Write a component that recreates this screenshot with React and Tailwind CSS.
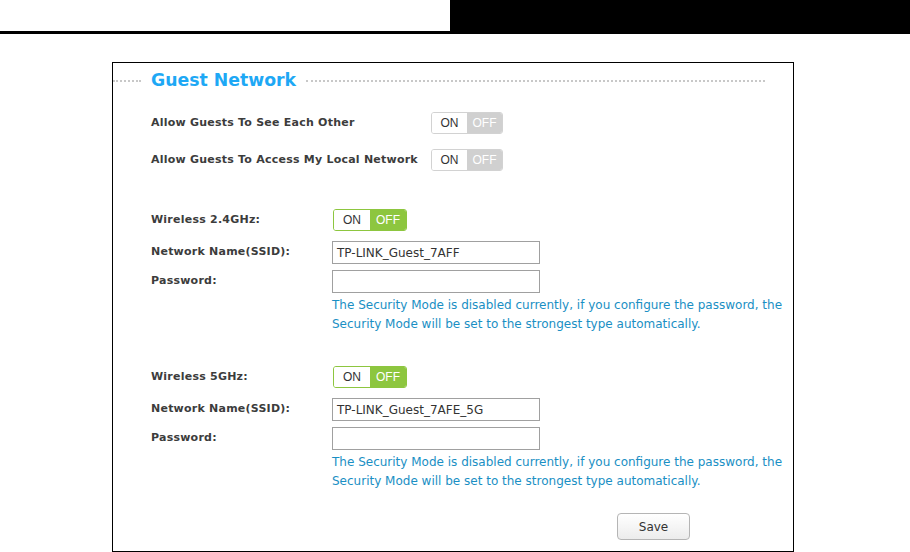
import React from 'react';

const font = { fontFamily: "'DejaVu Sans', Verdana, sans-serif" };

const Toggle = ({ active }) => {
  // active = green style (wireless switches), else gray
  if (active) {
    return (
      <div className="flex h-[22px] w-[74px] rounded-[3px] border border-[#8dc63f] overflow-hidden text-[12px]" style={{ fontFamily: "'Liberation Sans', Arial, sans-serif" }}>
        <div className="flex-1 flex items-center justify-center bg-white text-[#333]">ON</div>
        <div className="flex-1 flex items-center justify-center bg-[#8dc63f] text-white">OFF</div>
      </div>
    );
  }
  return (
    <div className="flex h-[22px] w-[72px] rounded-[3px] border border-[#d2d2d2] overflow-hidden text-[12px]" style={{ fontFamily: "'Liberation Sans', Arial, sans-serif" }}>
      <div className="flex-1 flex items-center justify-center bg-white text-[#333]">ON</div>
      <div className="flex-1 flex items-center justify-center bg-[#d0d0d0] text-white">OFF</div>
    </div>
  );
};

const Label = ({ children, w }) => (
  <div className={`${w} text-[11px] font-bold tracking-[0.23px] text-[#3c3c3c]`}>{children}</div>
);

const TextInput = ({ value }) => (
  <div className="h-[23px] w-[208px] border border-[#a0a0a0] bg-white px-[4px] flex items-center text-[12px] text-[#333]">
    {value}
  </div>
);

const Hint = () => (
  <div className="text-[12px] leading-[19px] text-[#1a8fc4]">
    <p>The Security Mode is disabled currently, if you configure the password, the</p>
    <p>Security Mode will be set to the strongest type automatically.</p>
  </div>
);

const WirelessBlock = ({ band, ssid }) => (
  <div className="flex flex-col">
    <div className="flex items-center h-[22px]">
      <Label w="w-[182px]">{band}</Label>
      <Toggle active />
    </div>
    <div className="flex items-center h-[23px] mt-[10px]">
      <Label w="w-[181px]">Network Name(SSID):</Label>
      <TextInput value={ssid} />
    </div>
    <div className="flex items-center h-[23px] mt-[6px]">
      <Label w="w-[181px]">Password:</Label>
      <TextInput value="" />
    </div>
    <div className="pl-[181px] mt-[3px]">
      <Hint />
    </div>
  </div>
);

export default function App() {
  return (
    <div className="w-[910px] h-[552px] bg-white overflow-hidden" style={font}>
      {/* top strip */}
      <div className="flex h-[34px]">
        <div className="w-[450px] border-b-[3px] border-black"></div>
        <div className="flex-1 bg-black"></div>
      </div>

      {/* guest network panel */}
      <div className="ml-[112px] mt-[28px] w-[682px] h-[490px] border border-black">
        <div className="flex items-center h-[32px] mt-[2px]">
          <div className="w-[28px] border-t-2 border-dotted border-[#c8c8c8]"></div>
          <h1 className="mx-[10px] text-[17.3px] font-bold text-[#1ea8f5]">Guest Network</h1>
          <div className="w-[459px] border-t-2 border-dotted border-[#c8c8c8]"></div>
        </div>

        <div className="pl-[38px]">
          <div className="flex items-center h-[22px] mt-[15px]">
            <Label w="w-[280px]">Allow Guests To See Each Other</Label>
            <Toggle />
          </div>
          <div className="flex items-center h-[22px] mt-[15px]">
            <Label w="w-[280px]">Allow Guests To Access My Local Network</Label>
            <Toggle />
          </div>

          <div className="mt-[38px]">
            <WirelessBlock band="Wireless 2.4GHz:" ssid="TP-LINK_Guest_7AFF" />
          </div>
          <div className="mt-[32px]">
            <WirelessBlock band="Wireless 5GHz:" ssid="TP-LINK_Guest_7AFE_5G" />
          </div>

          <div className="flex mt-[22px] pl-[466px]">
            <button className="h-[27px] w-[73px] rounded-[4px] border border-[#b5b5b5] bg-gradient-to-b from-white to-[#ececec] text-[12px] text-[#333]">
              Save
            </button>
          </div>
        </div>
      </div>
    </div>
  );
}
